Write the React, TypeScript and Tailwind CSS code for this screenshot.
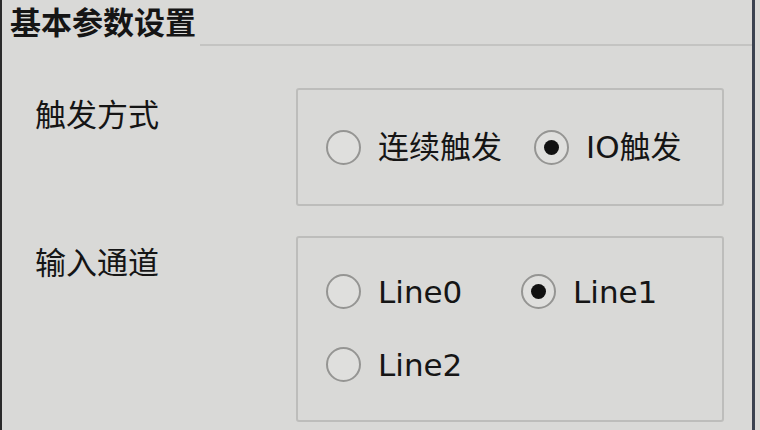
import React from "react";

const font = { fontFamily: '"DejaVu Sans", "Noto Sans CJK SC", sans-serif' };

function Radio({ checked }: { checked?: boolean }) {
  return (
    <div className="w-[35px] h-[35px] rounded-full border-2 border-[#959593] bg-[#dfdfdd] flex items-center justify-center shrink-0">
      {checked && <div className="w-[15px] h-[15px] rounded-full bg-[#111]" />}
    </div>
  );
}

function Option({ label, checked }: { label: string; checked?: boolean }) {
  return (
    <div className="flex items-center gap-[17px]">
      <Radio checked={checked} />
      <span className="text-[31px] leading-[34px] text-[#151515]">{label}</span>
    </div>
  );
}

export default function App() {
  return (
    <div
      className="w-[760px] h-[430px] bg-[#d9d9d7] flex overflow-hidden"
      style={font}
    >
      <div className="w-[2px] h-full bg-[#2a2a2a] shrink-0" />
      <div className="flex-1 flex flex-col">
        <div className="flex items-end h-[46px]">
          <div className="pl-[8px] pt-[7px] h-full text-[31px] leading-[32px] font-bold text-[#151515]">
            基本参数设置
          </div>
          <div className="flex-1 ml-[4px] border-b-2 border-[#c4c4c2]" />
        </div>
        <div className="flex mt-[42px]">
          <div className="w-[294px] pl-[33px] pt-[10px] text-[31px] leading-[34px] text-[#151515]">
            触发方式
          </div>
          <div className="w-[428px] h-[118px] border-2 border-[#bdbdbb] rounded-[3px] flex items-center pl-[28px] gap-[32px]">
            <Option label="连续触发" />
            <Option label="IO触发" checked />
          </div>
        </div>
        <div className="flex mt-[30px]">
          <div className="w-[294px] pl-[33px] pt-[10px] text-[31px] leading-[34px] text-[#151515]">
            输入通道
          </div>
          <div className="w-[428px] h-[186px] border-2 border-[#bdbdbb] rounded-[3px] pl-[28px] pt-[36px] grid grid-cols-[195px_1fr] gap-y-[38px] content-start">
            <Option label="Line0" />
            <Option label="Line1" checked />
            <Option label="Line2" />
          </div>
        </div>
      </div>
      <div className="w-[3px] h-full bg-[#3a4250] shrink-0 mr-[5px]" />
    </div>
  );
}
